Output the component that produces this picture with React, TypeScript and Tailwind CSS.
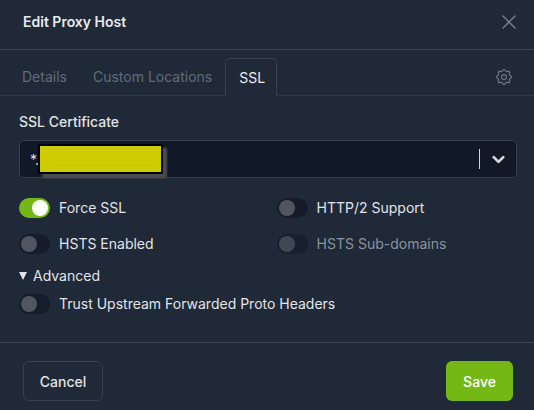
/**
 * EditProxyHost — SSL tab of the proxy host modal
 */

import { X, ChevronDown } from 'lucide-react';

function Toggle({ label, on = false, muted = false }: { label: string; on?: boolean; muted?: boolean }) {
  return (
    <label className={`flex items-center gap-[9px] text-[14px] leading-5 font-normal ${muted ? 'text-[#8c939d]' : 'text-[#e1e4e8]'}`}>
      <span
        className={`flex items-center w-[31px] h-[20px] rounded-full p-[2px] ${on ? 'bg-[#74b816] justify-end' : 'bg-[#151d2c] justify-start'} ${muted ? 'opacity-70' : ''}`}
      >
        <span className={`w-[16px] h-[16px] rounded-full ${on ? 'bg-white' : 'bg-[#50555f]'}`} />
      </span>
      <span>{label}</span>
    </label>
  );
}

function GearIcon() {
  return (
    <svg width="20" height="20" viewBox="0 0 24 24" fill="none" stroke="currentColor" strokeWidth="1.5" className="ml-auto self-center text-[#6d7581]">
      <path d="M10.325 4.317c.426 -1.756 2.924 -1.756 3.35 0a1.724 1.724 0 0 0 2.573 1.066c1.543 -.94 3.31 .826 2.37 2.37a1.724 1.724 0 0 0 1.065 2.572c1.756 .426 1.756 2.924 0 3.35a1.724 1.724 0 0 0 -1.066 2.573c.94 1.543 -.826 3.31 -2.37 2.37a1.724 1.724 0 0 0 -2.572 1.065c-.426 1.756 -2.924 1.756 -3.35 0a1.724 1.724 0 0 0 -2.573 -1.066c-1.543 .94 -3.31 -.826 -2.37 -2.37a1.724 1.724 0 0 0 -1.065 -2.572c-1.756 -.426 -1.756 -2.924 0 -3.35a1.724 1.724 0 0 0 1.066 -2.573c-.94 -1.543 .826 -3.31 2.37 -2.37c1 .608 2.296 .07 2.572 -1.065z" />
      <circle cx="12" cy="12" r="3" />
    </svg>
  );
}

export default function App() {
  return (
    <div
      className="w-[534px] h-[410px] flex flex-col overflow-hidden bg-[#1f2937] text-[#e1e4e8]"
      style={{ fontFamily: 'Inter, "Liberation Sans", sans-serif' }}
    >
      {/* header */}
      <div className="h-[50px] shrink-0 flex items-center justify-between pb-[6px] pl-[23px] pr-[13px] border-b border-[#3a4452]">
        <h2 className="text-[14px] font-semibold text-[#e9ebee]">Edit Proxy Host</h2>
        <X size={24} strokeWidth={1.25} className="text-[#7b838f]" />
      </div>

      {/* tabs */}
      <div className="h-[46px] shrink-0 flex items-end pt-[8px] pl-[9px] pr-[20px] border-b border-[#2d3848] text-[14px]">
        <div className="h-full flex items-center px-[13px] text-[#626c7b]">Details</div>
        <div className="h-full flex items-center px-[13px] text-[#626c7b]">Custom Locations</div>
        <div className="h-[38px] flex items-center pl-[13px] pr-[11px] -mb-px border border-b-0 border-[#364150] rounded-t-[5px] bg-[#1f2937] text-[#e9ebee]">
          SSL
        </div>
        <GearIcon />
      </div>

      {/* body */}
      <div className="flex-1 flex flex-col pl-[19px] pr-[17px] pt-[16px]">
        <div className="text-[14px] leading-5 font-medium text-[#e1e4e8]">SSL Certificate</div>
        <div className="mt-[8px] h-[38px] flex items-center pl-[10px] pr-[7px] rounded-[4px] border border-[#343e4d] bg-[#111827]">
          <span className="text-[14px] text-[#e1e4e8]">*.</span>
          <span className="-ml-px w-[125px] h-[30px] shrink-0 bg-[#cccc00] border-2 border-black shadow-[4px_4px_2px_rgba(90,90,90,0.8)]" />
          <span className="ml-auto w-px h-[20px] bg-[#d5d7da]" />
          <ChevronDown size={19} strokeWidth={3.5} className="ml-[9px] mr-px text-[#d5d7da]" />
        </div>

        <div className="mt-[20px] grid grid-cols-[257.6px_1fr] gap-y-[16px]">
          <Toggle label="Force SSL" on />
          <Toggle label="HTTP/2 Support" />
          <Toggle label="HSTS Enabled" />
          <Toggle label="HSTS Sub-domains" muted />
        </div>

        <div className="mt-[12px] flex items-center gap-[6px] text-[14px] leading-5 text-[#e1e4e8]">
          <span className="w-0 h-0 border-x-[4.5px] border-x-transparent border-t-[8px] border-t-[#e1e4e8]" />
          <span>Advanced</span>
        </div>
        <div className="mt-[8px]">
          <Toggle label="Trust Upstream Forwarded Proto Headers" />
        </div>
      </div>

      {/* footer */}
      <div className="h-[68px] shrink-0 flex items-start justify-between pt-[18px] pl-[23px] pr-[21px] border-t border-[#3a4452]">
        <button className="w-[80px] h-[40px] rounded-[6px] border border-[#364150] text-[14px] font-medium text-[#e1e4e8]">
          Cancel
        </button>
        <button className="w-[67px] h-[40px] rounded-[6px] bg-[#74b816] text-[14px] font-medium text-white">
          Save
        </button>
      </div>
    </div>
  );
}
